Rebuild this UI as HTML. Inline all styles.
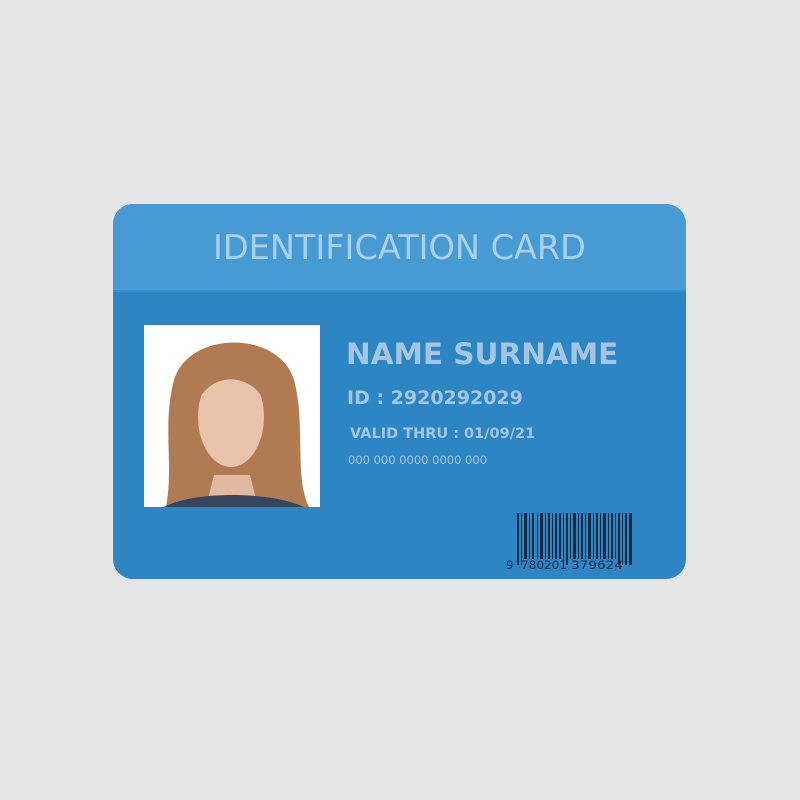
<!DOCTYPE html>
<html><head><style>
body{margin:0;width:800px;height:800px;background:#e5e5e5;position:relative;font-family:"DejaVu Sans","Liberation Sans",sans-serif;overflow:hidden}
.card{position:absolute;left:113px;top:204px;width:573px;height:375px;border-radius:20px;background:#2e85c3;overflow:hidden}
.hd{height:86px;background:#489bd2;border-bottom:2px solid #3a8ecb;text-align:center;color:#a8d0ec;font-size:33.5px;line-height:88px;letter-spacing:0px}
.t{position:absolute;color:#a2c6e3;font-weight:bold;white-space:nowrap}
.photo{position:absolute;left:31px;top:121px;width:176px;height:182px;background:#fff;overflow:hidden}
</style></head><body>
<div class="card">
<div class="hd">IDENTIFICATION CARD</div>
<div class="photo"><svg width="176" height="182">
<path d="M22 182 C30 140 18 100 30 55 C45 5 135 5 150 55 C162 100 150 150 165 182Z" fill="#b07a52"/>
<path d="M62 182 L70 150 L106 150 L114 182Z" fill="#e2b9a0"/>
<ellipse cx="87" cy="92" rx="33" ry="50" fill="#e8c2aa"/>
<path d="M52 80 C55 30 115 25 122 80 C112 50 68 42 52 80Z" fill="#b07a52"/>
<path d="M20 182 C50 166 125 166 160 182Z" fill="#34475e"/>
</svg></div>
<div class="t" style="left:233px;top:133px;font-size:29.5px">NAME SURNAME</div>
<div class="t" style="left:234px;top:183px;font-size:19px">ID : 2920292029</div>
<div class="t" style="left:237px;top:222px;font-size:14.5px">VALID THRU : 01/09/21</div>
<div class="t" style="left:235px;top:249px;font-size:11.5px;font-weight:normal">000 000 0000 0000 000</div>
<svg style="position:absolute;left:392px;top:303px" width="140" height="70">
<g fill="#0f2b44">
<rect x="12" y="6" width="2" height="52"/><rect x="16" y="6" width="1" height="52"/><rect x="19" y="6" width="3" height="46"/><rect x="24" y="6" width="1" height="46"/><rect x="27" y="6" width="2" height="46"/><rect x="32" y="6" width="1" height="46"/><rect x="35" y="6" width="3" height="46"/><rect x="40" y="6" width="1" height="46"/><rect x="43" y="6" width="2" height="46"/><rect x="47" y="6" width="1" height="46"/><rect x="50" y="6" width="2" height="46"/><rect x="54" y="6" width="2" height="46"/><rect x="58" y="6" width="1" height="52"/><rect x="61" y="6" width="2" height="52"/><rect x="65" y="6" width="1" height="46"/><rect x="68" y="6" width="3" height="46"/><rect x="73" y="6" width="1" height="46"/><rect x="76" y="6" width="2" height="46"/><rect x="80" y="6" width="1" height="46"/><rect x="83" y="6" width="3" height="46"/><rect x="88" y="6" width="1" height="46"/><rect x="91" y="6" width="2" height="46"/><rect x="95" y="6" width="1" height="46"/><rect x="98" y="6" width="3" height="46"/><rect x="103" y="6" width="1" height="46"/><rect x="106" y="6" width="2" height="46"/><rect x="110" y="6" width="1" height="46"/><rect x="113" y="6" width="2" height="52"/><rect x="117" y="6" width="1" height="52"/><rect x="120" y="6" width="2" height="52"/><rect x="124" y="6" width="3" height="52"/>
</g>
<g fill="#0f2b44" font-family="DejaVu Sans,sans-serif" font-size="11.5">
<text x="1" y="62">9</text><text x="16" y="62" textLength="46" lengthAdjust="spacingAndGlyphs">780201</text><text x="66" y="62" textLength="52" lengthAdjust="spacingAndGlyphs">379624</text>
</g>
</svg>
</div>
</body></html>
